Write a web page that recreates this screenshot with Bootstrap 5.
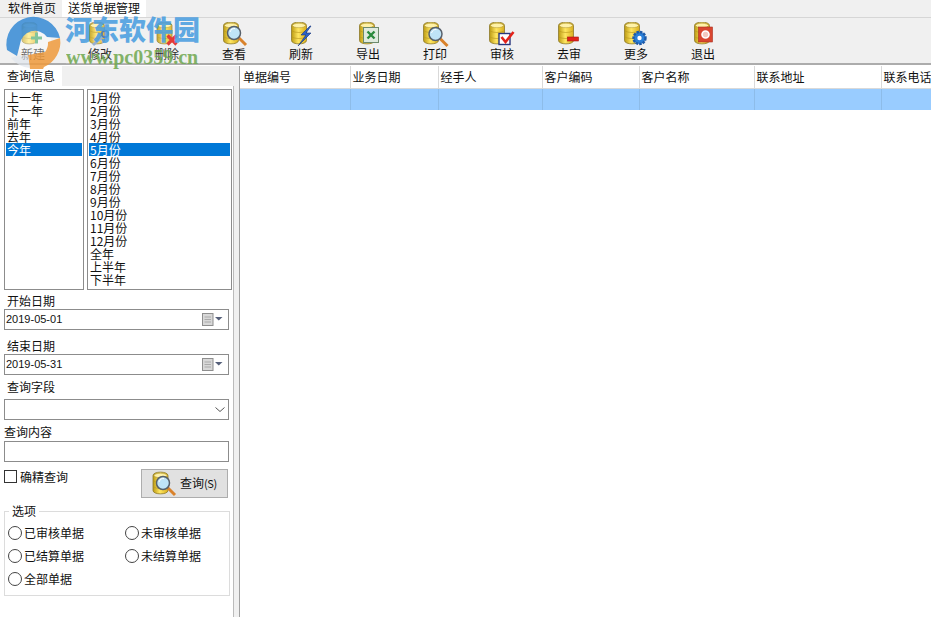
<!doctype html>
<html lang="zh"><head><meta charset="utf-8"><title>送货单据管理</title>
<link href="https://cdn.jsdelivr.net/npm/bootstrap@5.3.0/dist/css/bootstrap.min.css" rel="stylesheet">
<style>
html,body{height:617px;overflow:hidden}
body{font:12px/1.2 "Noto Sans CJK SC","Liberation Sans",sans-serif;color:#111;background:#f0f0f0;width:931px;position:relative}
.tabrow{height:17px;background:#f0f0f0}
.tabitem{height:17px;line-height:16px;padding:0 6px 0 8px}
.tabitem.on{background:#fff;width:84px;padding-left:6px;white-space:nowrap}
.tool{height:46px;border-top:1px solid #d6d6d6}
.toolbtn{width:67px;height:45px;padding:4px 1px 0 0;text-align:center;flex:none}
.toolbtn svg{display:block;margin:0 auto;width:32px;height:26px}
.toolbtn span{display:block;line-height:14px;margin-top:-1px}
.rule{height:3px;background:#fff;border-top:2px solid #acacac}
.mainrow{height:551px}
.side{width:234px;flex:none;position:relative;background:#f0f0f0}
.sidetab{width:62px;height:20px;background:#fff;padding:1px 0 0 7px;line-height:18px}
.pane{background:#fff;height:531px;padding:3px 0 0 4px;border-right:1px solid #bbb}
.lists{height:201px}
.lbox{border:1px solid #8c8c8c;background:#fff;height:201px;line-height:13px;padding:1px}
.lbox div{height:13px;padding-left:1px;white-space:nowrap}
.lbox .sel{background:#0078d7;color:#fff}
.yearbox{width:80px}.monthbox{width:145px;margin-left:3px}
.fld{width:225px;height:21px;border:1px solid #8c8c8c;background:#fff;font-family:"Liberation Sans",sans-serif;font-size:11px;line-height:19px;padding-left:1px}
.lbl{padding-left:3px;line-height:16px}
.lbl1{margin-top:3px}.lbl2{margin-top:8px}.lbl3{margin-top:4px;margin-bottom:4px}.lbl4{margin-top:4px;margin-bottom:1px;padding-left:0}
.calico{margin-right:2px}
.chev{margin-right:2px}
.checkline{width:225px;margin-top:7px;height:30px}
.chk{width:13px;height:13px;border:1px solid #333;background:#fff;flex:none;margin-top:1px}
.chktext{margin-left:3px;line-height:15px}
.qbtn{width:87px;height:29px;background:#e1e1e1;border:1px solid #adadad;margin-left:auto;margin-right:1px;color:#111}
.qbtn svg{width:32px;height:26px;margin-left:5px;flex:none}
.qbtn span{margin-left:1px;white-space:nowrap}
.qbtn small{font-size:11px;letter-spacing:-.4px}
.optbox{position:relative;width:226px;height:85px;border:1px solid #dcdcdc;margin-top:12px;padding:9px 0 0 3px}
.optlegend{position:absolute;left:4px;top:-8px;background:#fff;padding:0 3px;line-height:14px}
.optrow{height:23px;line-height:17px}
.opt{width:117px;flex:none}
.rd{width:14px;height:14px;border:1px solid #444;border-radius:50%;background:#fff;flex:none;margin-right:2px}
.splitter{width:6px;flex:none;background:#f0f0f0;border-right:1px solid #a0a0a0}
.gridwrap{flex:1;background:#fff;overflow:hidden}
.gridtbl{table-layout:fixed;width:721px;border-collapse:collapse;white-space:nowrap}
.gridtbl th{height:22px;font-weight:400;padding:0 0 0 2px;background:#fff;border-right:1px solid #d9d9d9;border-bottom:1px solid #d9d9d9;overflow:hidden}
.gridtbl th:first-child{padding-left:3px}
.gridtbl td{height:22px;background:#99ccff;border-right:1px solid #8dbce9;padding:0}
.c1{width:110px}.c2{width:88px}.c3{width:104px}.c4{width:97px}.c5{width:115px}.c6{width:127px}.c7{width:80px}
.wm{position:absolute;left:0;top:0;width:215px;height:72px;pointer-events:none}
.wmlogo{position:absolute;left:0;top:0;width:66px;height:72px}
.wmbg{position:absolute;left:66px;top:18px;width:134px;height:46px;background:#fff;opacity:.12}
.wmt1{position:absolute;left:65px;top:13px;font-size:27px;line-height:32px;font-weight:900;color:#4a9ee0;opacity:.88;white-space:nowrap}
.wmt2{position:absolute;left:66px;top:48px;font:700 20px/18px "Liberation Serif",serif;color:#6fa84f;opacity:.85;white-space:nowrap}
</style></head><body>
<svg width="0" height="0" class="d-block" aria-hidden="true"><defs>
<linearGradient id="gy" x1="0" x2="1" y1="0" y2="0"><stop offset="0" stop-color="#bb9a12"/><stop offset=".45" stop-color="#ffe661"/><stop offset="1" stop-color="#d8ae1e"/></linearGradient>
<g id="cyl"><path d="M0 3.500c0-4.500 15-4.500 15 0v15c0 4.500-15 4.500-15 0z" fill="url(#gy)" stroke="#8d7a2c" stroke-width=".8"/><ellipse cx="7.500" cy="3.500" rx="6.500" ry="2.200" fill="#fff2a8" stroke="#a89030" stroke-width=".5"/><path d="M.5 9c3 2 11 2 14 0M.5 15c3 2 11 2 14 0" fill="none" stroke="#b8951c" stroke-width=".6"/></g>
<g id="lens"><path d="M4 4l8 8" stroke="#d9822b" stroke-width="3"/><circle r="6.500" fill="#bfe4f7" stroke="#57606b" stroke-width="1.500"/><path d="M-4-1c1-3 3-3.800 5-3.500" stroke="#fff" fill="none"/></g>
</defs></svg>
<div class="tabrow d-flex"><div class="tabitem">软件首页</div><div class="tabitem on">送货单据管理</div></div>
<div class="tool d-flex">
<div class="toolbtn"><svg viewBox="0 0 32 26"><use href="#cyl" x="5" y="0"/><path d="M14 16h11M19.500 10.500v11" stroke="#2f9e5b" stroke-width="3"/></svg><span>新建</span></div>
<div class="toolbtn"><svg viewBox="0 0 32 26"><use href="#cyl" x="5.500" y="0"/><path d="M9 23l10-9" stroke="#8aa6c8" stroke-width="3"/><circle cx="21" cy="12" r="3.200" fill="none" stroke="#3f6ea5" stroke-width="2"/></svg><span>修改</span></div>
<div class="toolbtn"><svg viewBox="0 0 32 26"><use href="#cyl" x="6" y="0"/><path d="M16.500 13.500l9 9M25.500 13.500l-9 9" stroke="#e0201c" stroke-width="3.200"/></svg><span>删除</span></div>
<div class="toolbtn"><svg viewBox="0 0 32 26"><use href="#cyl" x="5.500" y="0"/><use href="#lens" x="16" y="11"/></svg><span>查看</span></div>
<div class="toolbtn"><svg viewBox="0 0 32 26"><use href="#cyl" x="6.500" y="0"/><path d="M25 4l-9 9h5l-8 11 13-13h-5l5-7z" fill="#2b62c9" stroke="#14347a" stroke-width=".6"/></svg><span>刷新</span></div>
<div class="toolbtn"><svg viewBox="0 0 32 26"><use href="#cyl" x="7.500" y="0"/><rect x="11.500" y="5.500" width="15" height="15" fill="#dfeadf" stroke="#6c8a6c"/><path d="M15.500 9.500l7 7M22.500 9.500l-7 7" stroke="#2a8a3c" stroke-width="2.400"/></svg><span>导出</span></div>
<div class="toolbtn"><svg viewBox="0 0 32 26"><use href="#cyl" x="4.500" y="0"/><use href="#lens" x="16.500" y="12"/></svg><span>打印</span></div>
<div class="toolbtn"><svg viewBox="0 0 32 26"><use href="#cyl" x="3.500" y="0"/><rect x="13" y="11.500" width="11" height="11" fill="#fff" stroke="#28367c" stroke-width="1.400"/><path d="M15.500 15l4 5 8-10" fill="none" stroke="#e2231a" stroke-width="2.600"/></svg><span>审核</span></div>
<div class="toolbtn"><svg viewBox="0 0 32 26"><use href="#cyl" x="5.500" y="0"/><rect x="14.500" y="15" width="11" height="4" fill="#e2231a" stroke="#a81612" stroke-width=".6"/></svg><span>去审</span></div>
<div class="toolbtn"><svg viewBox="0 0 32 26"><use href="#cyl" x="4.500" y="0"/><circle cx="19.500" cy="16" r="6" fill="#2a7fd8" stroke="#1e5aa8" stroke-width="2.400" stroke-dasharray="2.500 1"/><circle cx="19.500" cy="16" r="2.200" fill="#fff"/></svg><span>更多</span></div>
<div class="toolbtn"><svg viewBox="0 0 32 26"><use href="#cyl" x="7.500" y="0"/><rect x="11.500" y="5" width="14" height="15" fill="#d9452f" stroke="#a8301f" stroke-width=".6"/><circle cx="18.500" cy="12.500" r="3.500" fill="#f4c9c0" stroke="#fff" stroke-width="1.600"/></svg><span>退出</span></div>
</div>
<div class="rule"></div>
<div class="mainrow d-flex">
<aside class="side">
<div class="sidetab">查询信息</div>
<div class="pane">
<div class="lists d-flex">
<div class="lbox yearbox"><div>上一年</div><div>下一年</div><div>前年</div><div>去年</div><div class="sel">今年</div></div>
<div class="lbox monthbox"><div>1月份</div><div>2月份</div><div>3月份</div><div>4月份</div><div class="sel">5月份</div><div>6月份</div><div>7月份</div><div>8月份</div><div>9月份</div><div>10月份</div><div>11月份</div><div>12月份</div><div>全年</div><div>上半年</div><div>下半年</div></div>
</div>
<div class="lbl lbl1">开始日期</div>
<div class="fld d-flex align-items-center justify-content-between"><span>2019-05-01</span><svg class="calico" width="24" height="14" viewBox="0 0 24 14" aria-hidden="true"><rect x=".5" y=".5" width="10.500" height="12" fill="#d8d8d8" stroke="#8e8e8e"/><path d="M2.500 4h6.500M2.500 6.500h6.500M2.500 9h6.500" stroke="#aaa"/><path d="M13 4h7.500l-3.750 3.500z" fill="#56607a"/></svg></div>
<div class="lbl lbl2">结束日期</div>
<div class="fld d-flex align-items-center justify-content-between"><span>2019-05-31</span><svg class="calico" width="24" height="14" viewBox="0 0 24 14" aria-hidden="true"><rect x=".5" y=".5" width="10.500" height="12" fill="#d8d8d8" stroke="#8e8e8e"/><path d="M2.500 4h6.500M2.500 6.500h6.500M2.500 9h6.500" stroke="#aaa"/><path d="M13 4h7.500l-3.750 3.500z" fill="#56607a"/></svg></div>
<div class="lbl lbl3">查询字段</div>
<div class="fld d-flex align-items-center justify-content-end"><svg class="chev" width="12" height="7" viewBox="0 0 12 7" aria-hidden="true"><path d="M1.500 1.500l4.500 4 4.500-4" fill="none" stroke="#555"/></svg></div>
<div class="lbl lbl4">查询内容</div>
<div class="fld"></div>
<div class="checkline d-flex">
<div class="chk"></div><div class="chktext">确精查询</div>
<div class="qbtn d-flex align-items-center"><svg viewBox="0 0 32 26"><use href="#cyl" x="6" y="1"/><use href="#lens" x="16" y="12"/></svg><span>查询<small>(S)</small></span></div>
</div>
<div class="optbox">
<div class="optlegend">选项</div>
<div class="optrow d-flex"><div class="opt d-flex align-items-center"><i class="rd"></i>已审核单据</div><div class="opt d-flex align-items-center"><i class="rd"></i>未审核单据</div></div>
<div class="optrow d-flex"><div class="opt d-flex align-items-center"><i class="rd"></i>已结算单据</div><div class="opt d-flex align-items-center"><i class="rd"></i>未结算单据</div></div>
<div class="optrow d-flex"><div class="opt d-flex align-items-center"><i class="rd"></i>全部单据</div></div>
</div>
</div>
</aside>
<div class="splitter"></div>
<main class="gridwrap">
<table class="gridtbl"><colgroup><col class="c1"><col class="c2"><col class="c3"><col class="c4"><col class="c5"><col class="c6"><col class="c7"></colgroup>
<thead><tr><th>单据编号</th><th>业务日期</th><th>经手人</th><th>客户编码</th><th>客户名称</th><th>联系地址</th><th>联系电话</th></tr></thead>
<tbody><tr><td></td><td></td><td></td><td></td><td></td><td></td><td></td></tr></tbody></table>
</main>
</div>
<div class="wm">
<svg class="wmlogo" viewBox="0 0 66 72" aria-hidden="true"><circle cx="34" cy="42" r="17" fill="#fff" opacity=".4"/><path d="M7 50A27 27 0 0 1 60 38L47 37A15 15 0 0 0 20 44L17 56Z" fill="#3f8fd6" opacity=".9"/><path d="M60 38A27 27 0 0 1 44 67L43 69H30L28 55L45 52A15 15 0 0 0 48 42Z" fill="#ef9a3c" opacity=".85"/><path d="M17 56L28 55L30 68A27 27 0 0 1 11 58Z" fill="#dfe6ec" opacity=".7"/></svg>
<div class="wmbg"></div>
<div class="wmt1">河东软件园</div>
<div class="wmt2">www.pc0359.cn</div>
</div>
<script src="https://cdn.jsdelivr.net/npm/bootstrap@5.3.0/dist/js/bootstrap.bundle.min.js"></script>
</body></html>
